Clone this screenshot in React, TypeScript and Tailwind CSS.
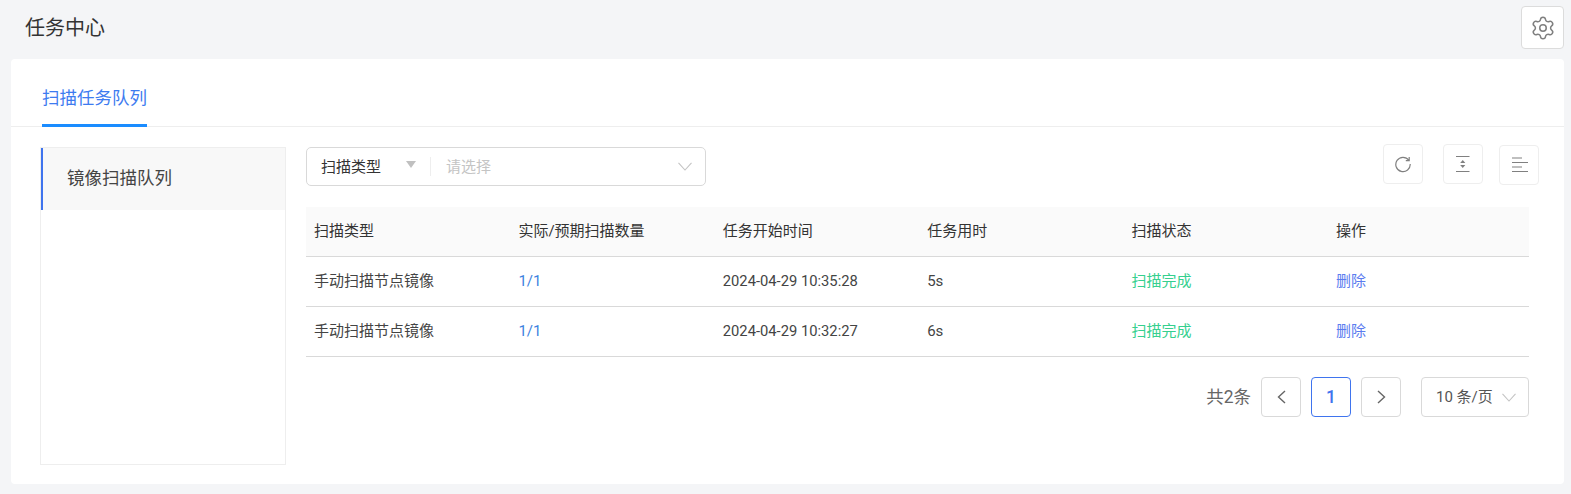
import { Settings } from "lucide-react";

const columns = ["扫描类型", "实际/预期扫描数量", "任务开始时间", "任务用时", "扫描状态", "操作"];

const rows = [
  { type: "手动扫描节点镜像", count: "1/1", start: "2024-04-29 10:35:28", used: "5s", status: "扫描完成" },
  { type: "手动扫描节点镜像", count: "1/1", start: "2024-04-29 10:32:27", used: "6s", status: "扫描完成" },
];

function IconButton({ children, className = "" }: { children: React.ReactNode; className?: string }) {
  return (
    <button type="button" className={`flex h-10 w-10 items-center justify-center rounded-[4px] border border-[#eeeeee] bg-white text-[#808080] ${className}`}>
      {children}
    </button>
  );
}

// shallow V used by the select boxes
function SelectArrow({ className = "" }: { className?: string }) {
  return (
    <svg className={className} width="14" height="9" viewBox="0 0 14 9" fill="none" aria-hidden>
      <path d="M.5.8 7 8 13.5.8" stroke="#c4c4c4" strokeWidth="1.1" />
    </svg>
  );
}

function Toolbar() {
  return (
    <div className="mr-[-10px] mt-[-3px] flex items-start">
      <IconButton>
        <svg width="18" height="18" viewBox="0 0 18 18" fill="none" aria-hidden>
          <path d="M14.8 5.2A7.2 7.2 0 1 0 16.2 9" stroke="currentColor" strokeWidth="1.2" />
          <path d="M15.2 2v3.6h-3.4" stroke="currentColor" strokeWidth="1.2" />
        </svg>
      </IconButton>
      <IconButton className="ml-5">
        <svg width="16" height="18" viewBox="0 0 16 18" fill="none" aria-hidden>
          <path d="M1 1.5h13.5M1 16.5h13.5" stroke="currentColor" strokeWidth="1.2" />
          <path d="M7.75 5l2.6 3h-5.2zM7.75 13l-2.6-3h5.2z" fill="currentColor" />
        </svg>
      </IconButton>
      <IconButton className="ml-4 mt-px">
        <svg width="17" height="16" viewBox="0 0 17 16" fill="none" aria-hidden>
          <path d="M1 1h10M1 5.5h16M1 10h10M1 14.5h16" stroke="currentColor" strokeWidth="1.2" />
        </svg>
      </IconButton>
    </div>
  );
}

function Filter() {
  return (
    <div className="flex h-[39px] w-[400px] items-center rounded-[5px] border border-[#d9d9d9] bg-white text-[15px]">
      <span className="ml-[14px] w-[60px] pt-px text-[#333333]">扫描类型</span>
      <svg className="ml-[25px] mb-1" width="10" height="7" viewBox="0 0 10 7" aria-hidden>
        <path d="M0 0h10L5 7z" fill="#c0c0c0" />
      </svg>
      <span className="ml-[14px] h-[19px] w-px bg-[#eeeeee]" />
      <span className="ml-[15px] flex-1 pt-px text-[#c4c4c4]">请选择</span>
      <SelectArrow className="mr-[13px]" />
    </div>
  );
}

function Table() {
  const cols = "grid h-[50px] grid-cols-[repeat(5,204.4px)_1fr] items-center border-b border-[#d9d9d9]";
  return (
    <div className="mt-[21px] text-[15px]">
      <div className={`${cols} bg-[#fafafa] text-[#333333]`}>
        {columns.map((c) => (
          <div key={c} className="pl-2">
            {c}
          </div>
        ))}
      </div>
      {rows.map((r) => (
        <div key={r.start} className={`${cols} text-[#444444]`}>
          <div className="pl-2">{r.type}</div>
          <div className="pl-2 text-[#3d82e0]">{r.count}</div>
          <div className="pl-2 text-[14.75px]">{r.start}</div>
          <div className="pl-2">{r.used}</div>
          <div className="pl-2 text-[#35d08f]">{r.status}</div>
          <div className="pl-2 text-[#5b7cf0]">删除</div>
        </div>
      ))}
    </div>
  );
}

function Pagination() {
  const box = "flex h-10 w-10 items-center justify-center rounded-[4px] border border-[#d9d9d9] text-[#666666]";
  return (
    <div className="mt-5 flex items-center justify-end text-[#555555]">
      <span className="mr-[10px] text-[17.5px] text-[#666666]">共2条</span>
      <div className={box}>
        <svg width="9" height="14" viewBox="0 0 9 14" fill="none" aria-hidden>
          <path d="M8 1 1.5 7 8 13" stroke="currentColor" strokeWidth="1.4" />
        </svg>
      </div>
      <div className="ml-[10px] flex h-10 w-10 items-center justify-center rounded-[4px] border border-[#3f74ee] text-[17.5px] font-medium text-[#3f74ee]">1</div>
      <div className={`ml-[10px] ${box}`}>
        <svg width="9" height="14" viewBox="0 0 9 14" fill="none" aria-hidden>
          <path d="M1 1l6.5 6L1 13" stroke="currentColor" strokeWidth="1.4" />
        </svg>
      </div>
      <div className="ml-5 flex h-10 w-[108px] items-center rounded-[4px] border border-[#d9d9d9] pl-[14px] text-[15px] text-[#555555]">
        <span>10 条/页</span>
        <SelectArrow className="ml-[9px]" />
      </div>
    </div>
  );
}

export default function App() {
  return (
    <div className="h-[494px] overflow-hidden bg-[#f4f5f7] pl-[11px] pr-[7px] font-['Roboto','Noto_Sans_CJK_SC',sans-serif]">
      <div className="flex h-[59px] items-start justify-between">
        <h1 className="ml-[14px] mt-[14px] text-[20px] leading-[28px] font-normal text-[#333333]">任务中心</h1>
        <button type="button" className="mt-[6px] flex h-[43px] w-[43px] items-center justify-center rounded-[4px] border border-[#dcdcdc] bg-white text-[#808080]">
          <Settings size={26} strokeWidth={1.4} />
        </button>
      </div>

      <div className="h-[425px] rounded-[4px] bg-white">
        <div className="flex h-[68px] border-b border-[#eeeeee] pl-[31px]">
          <div className="flex h-[68px] w-[105px] items-center border-b-[3px] border-[#1a8cff] pt-[13px] text-[17.5px] text-[#3d7bf0]">扫描任务队列</div>
        </div>

        <div className="flex pl-[29px] pr-[35px] pt-5">
          <aside className="h-[318px] w-[246px] shrink-0 border border-[#eeeeee]">
            <div className="flex h-[62px] items-center border-l-2 border-[#3f74ee] bg-[#f8f8f8] pb-[2px] pl-6 text-[17.5px] text-[#444444]">镜像扫描队列</div>
          </aside>

          <main className="ml-5 min-w-0 flex-1">
            <div className="flex items-start justify-between">
              <Filter />
              <Toolbar />
            </div>
            <Table />
            <Pagination />
          </main>
        </div>
      </div>
    </div>
  );
}
